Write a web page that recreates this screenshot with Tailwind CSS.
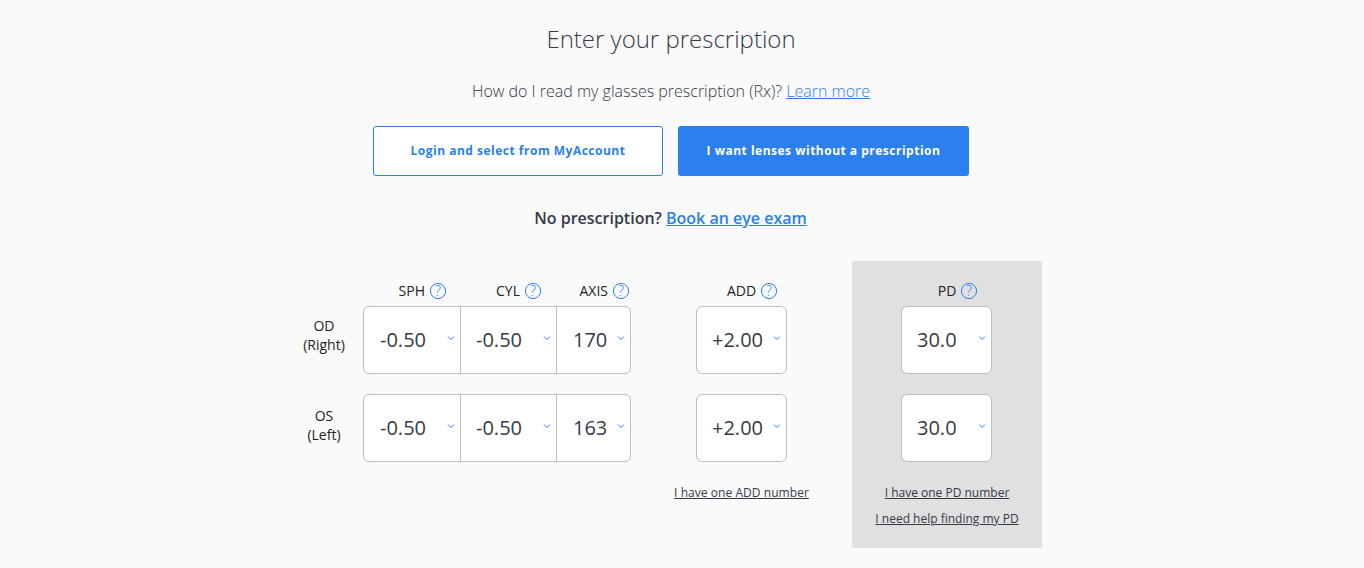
<!DOCTYPE html>
<html lang="en">
<head>
  <meta charset="UTF-8" />
  <title>Enter your prescription</title>
  <script src="https://cdn.jsdelivr.net/npm/@tailwindcss/browser@4"></script>
</head>
<body class="bg-[#fafafa] font-['Open_Sans',sans-serif] text-[#333a48] overflow-hidden">
<div class="w-[1342px] h-[568px] flex flex-col items-center">

  <h1 class="mt-[21px] h-[36px] leading-[36px] text-[24px] font-light text-[#333a48]">Enter your prescription</h1>
  <p class="mt-[23px] h-[22px] leading-[22px] text-[16px] font-light text-[#333a48]">How do I read my glasses prescription (Rx)? <a href="#" class="text-[#2b80ed] underline">Learn more</a></p>

  <div class="mt-[24px] flex gap-[15px]">
    <button class="w-[290px] h-[50px] rounded-[3px] border border-[#2b80ed] bg-white text-[#2b80ed] text-[12px] font-bold tracking-[0.5px]">Login and select from MyAccount</button>
    <button class="w-[291px] h-[50px] rounded-[3px] bg-[#2b80ed] text-white text-[12px] font-bold tracking-[0.5px]">I want lenses without a prescription</button>
  </div>

  <p class="mt-[31px] h-[22px] leading-[22px] text-[16px] font-semibold text-[#333a48] -ml-px">No prescription? <a href="#" class="text-[#2b80ed] underline">Book an eye exam</a></p>

  <div class="mt-[32px] w-full flex items-start pl-[300px]">
    <!-- eye labels -->
    <div class="w-[48px] mr-[15px] pt-[45px] text-[14px] leading-[19px] text-center text-[#222]">
      <div class="h-[68px] flex flex-col justify-center pb-[10px]"><span>OD</span><span>(Right)</span></div>
      <div class="h-[68px] mt-[20px] flex flex-col justify-center pb-[6px]"><span>OS</span><span>(Left)</span></div>
    </div>

    <!-- SPH CYL AXIS -->
    <div class="w-[268px] pt-[20px]">
      <div class="h-[25px] flex text-[14px] leading-[20px] text-[#222]">
        <div class="w-[97px] flex justify-end items-start gap-[4px] pr-[13px]"><span>SPH</span><svg class="w-[18px] h-[18px] mt-px" viewBox="0 0 18 18" fill="none"><circle cx="9" cy="9" r="7.6" stroke="#2b80ed" stroke-width="1"/><text x="9" y="14" text-anchor="middle" font-size="14" font-weight="300" fill="#2b80ed">?</text></svg></div>
        <div class="w-[96px] flex justify-end items-start gap-[4px] pr-[14px]"><span>CYL</span><svg class="w-[18px] h-[18px] mt-px" viewBox="0 0 18 18" fill="none"><circle cx="9" cy="9" r="7.6" stroke="#2b80ed" stroke-width="1"/><text x="9" y="14" text-anchor="middle" font-size="14" font-weight="300" fill="#2b80ed">?</text></svg></div>
        <div class="w-[75px] flex justify-end items-start gap-[4px] pr-[1px]"><span>AXIS</span><svg class="w-[18px] h-[18px] mt-px" viewBox="0 0 18 18" fill="none"><circle cx="9" cy="9" r="7.6" stroke="#2b80ed" stroke-width="1"/><text x="9" y="14" text-anchor="middle" font-size="14" font-weight="300" fill="#2b80ed">?</text></svg></div>
      </div>
      <div class="h-[68px] flex rounded-[6px] border border-[#bdbdbd] bg-white text-[20px]">
        <div class="w-[97px] border-r border-[#bdbdbd] relative pl-[16px] leading-[66px]">-0.50<svg class="absolute right-[5px] top-[28px] w-[8px] h-[6px]" viewBox="0 0 8 6" fill="none"><path d="M1 1.5 4 4.5 7 1.5" stroke="#3f7cf0" stroke-width="1"/></svg></div>
        <div class="w-[96px] border-r border-[#bdbdbd] relative pl-[15px] leading-[66px]">-0.50<svg class="absolute right-[5px] top-[28px] w-[8px] h-[6px]" viewBox="0 0 8 6" fill="none"><path d="M1 1.5 4 4.5 7 1.5" stroke="#3f7cf0" stroke-width="1"/></svg></div>
        <div class="flex-1 relative pl-[16px] leading-[66px]">170<svg class="absolute right-[5px] top-[28px] w-[8px] h-[6px]" viewBox="0 0 8 6" fill="none"><path d="M1 1.5 4 4.5 7 1.5" stroke="#3f7cf0" stroke-width="1"/></svg></div>
      </div>
      <div class="mt-[20px] h-[68px] flex rounded-[6px] border border-[#bdbdbd] bg-white text-[20px]">
        <div class="w-[97px] border-r border-[#bdbdbd] relative pl-[16px] leading-[66px]">-0.50<svg class="absolute right-[5px] top-[28px] w-[8px] h-[6px]" viewBox="0 0 8 6" fill="none"><path d="M1 1.5 4 4.5 7 1.5" stroke="#3f7cf0" stroke-width="1"/></svg></div>
        <div class="w-[96px] border-r border-[#bdbdbd] relative pl-[15px] leading-[66px]">-0.50<svg class="absolute right-[5px] top-[28px] w-[8px] h-[6px]" viewBox="0 0 8 6" fill="none"><path d="M1 1.5 4 4.5 7 1.5" stroke="#3f7cf0" stroke-width="1"/></svg></div>
        <div class="flex-1 relative pl-[16px] leading-[66px]">163<svg class="absolute right-[5px] top-[28px] w-[8px] h-[6px]" viewBox="0 0 8 6" fill="none"><path d="M1 1.5 4 4.5 7 1.5" stroke="#3f7cf0" stroke-width="1"/></svg></div>
      </div>
    </div>

    <!-- ADD -->
    <div class="ml-[43px] w-[135px] pt-[20px] flex flex-col items-center">
      <div class="h-[25px] flex items-start justify-center gap-[4px] pl-[22px] text-[14px] leading-[20px] text-[#222]"><span>ADD</span><svg class="w-[18px] h-[18px] mt-px" viewBox="0 0 18 18" fill="none"><circle cx="9" cy="9" r="7.6" stroke="#2b80ed" stroke-width="1"/><text x="9" y="14" text-anchor="middle" font-size="14" font-weight="300" fill="#2b80ed">?</text></svg></div>
      <div class="w-[91px] h-[68px] rounded-[6px] border border-[#bdbdbd] bg-white text-[20px] relative pl-[15px] leading-[66px]">+2.00<svg class="absolute right-[5px] top-[28px] w-[8px] h-[6px]" viewBox="0 0 8 6" fill="none"><path d="M1 1.5 4 4.5 7 1.5" stroke="#3f7cf0" stroke-width="1"/></svg></div>
      <div class="mt-[20px] w-[91px] h-[68px] rounded-[6px] border border-[#bdbdbd] bg-white text-[20px] relative pl-[15px] leading-[66px]">+2.00<svg class="absolute right-[5px] top-[28px] w-[8px] h-[6px]" viewBox="0 0 8 6" fill="none"><path d="M1 1.5 4 4.5 7 1.5" stroke="#3f7cf0" stroke-width="1"/></svg></div>
      <a href="#" class="mt-[22px] text-[12px] leading-[18px] tracking-[0.05px] underline whitespace-nowrap">I have one ADD number</a>
    </div>

    <!-- PD panel -->
    <div class="ml-[43px] w-[190px] h-[287px] rounded-[3px] bg-[#e0e0e0] pt-[20px] flex flex-col items-center">
      <div class="h-[25px] flex items-start justify-center gap-[4px] pl-[22px] text-[14px] leading-[20px] text-[#222]"><span>PD</span><svg class="w-[18px] h-[18px] mt-px" viewBox="0 0 18 18" fill="none"><circle cx="9" cy="9" r="7.6" stroke="#2b80ed" stroke-width="1"/><text x="9" y="14" text-anchor="middle" font-size="14" font-weight="300" fill="#2b80ed">?</text></svg></div>
      <div class="w-[91px] h-[68px] -ml-px rounded-[6px] border border-[#bdbdbd] bg-white text-[20px] relative pl-[15px] leading-[66px]">30.0<svg class="absolute right-[5px] top-[28px] w-[8px] h-[6px]" viewBox="0 0 8 6" fill="none"><path d="M1 1.5 4 4.5 7 1.5" stroke="#3f7cf0" stroke-width="1"/></svg></div>
      <div class="mt-[20px] w-[91px] h-[68px] -ml-px rounded-[6px] border border-[#bdbdbd] bg-white text-[20px] relative pl-[15px] leading-[66px]">30.0<svg class="absolute right-[5px] top-[28px] w-[8px] h-[6px]" viewBox="0 0 8 6" fill="none"><path d="M1 1.5 4 4.5 7 1.5" stroke="#3f7cf0" stroke-width="1"/></svg></div>
      <a href="#" class="mt-[22px] text-[12px] leading-[18px] underline whitespace-nowrap">I have one PD number</a>
      <a href="#" class="mt-[8px] text-[12px] leading-[18px] underline whitespace-nowrap">I need help finding my PD</a>
    </div>
  </div>
</div>
</body>
</html>
